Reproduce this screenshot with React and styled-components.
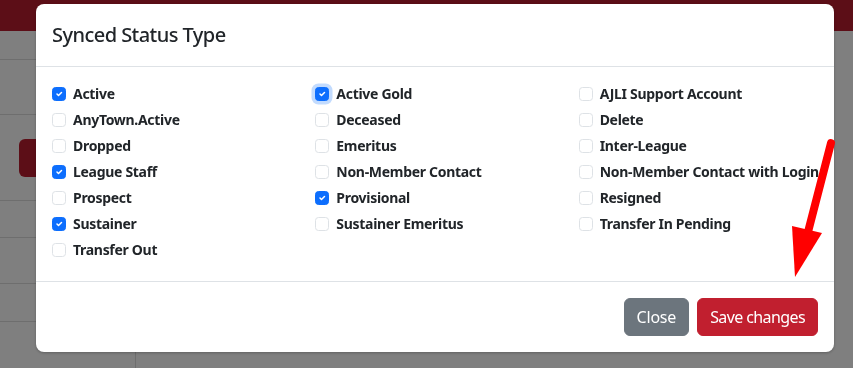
import React from "react";
import styled, { createGlobalStyle } from "styled-components";

const GlobalStyle = createGlobalStyle`
  html, body { margin: 0; padding: 0; }
  body {
    width: 853px;
    height: 368px;
    overflow: hidden;
    background: #ffffff;
    font-family: "Noto Sans", "Open Sans", sans-serif;
    color: #212529;
  }
`;

const Page = styled.div`
  width: 853px;
  height: 368px;
  display: flex;
  flex-direction: column;
  background: #ffffff;
`;

const TopBar = styled.div`
  height: 31px;
  background: #b91c2e;
  flex: none;
`;

const PageBody = styled.div`
  flex: 1;
  display: flex;
`;

const Sidebar = styled.div`
  width: 135px;
  border-right: 1px solid #dcdcdc;
  display: flex;
  flex-direction: column;
`;

const SideRow = styled.div`
  height: ${(p) => p.$h}px;
  border-bottom: 1px solid #dcdcdc;
  box-sizing: border-box;
  display: flex;
  align-items: center;
  padding-left: 19px;
`;

const SideButton = styled.div`
  width: 100px;
  height: 38px;
  border-radius: 6px;
  background: #b91c2e;
`;

const Backdrop = styled.div`
  position: fixed;
  inset: 0;
  background: rgba(0, 0, 0, 0.5);
`;

const ModalWrap = styled.div`
  position: fixed;
  inset: 0;
  padding: 4px 0 0 36px;
`;

const Modal = styled.div`
  width: 798px;
  background: #ffffff;
  border-radius: 8px;
  box-shadow: 0 1px 3px rgba(0, 0, 0, 0.25);
  display: flex;
  flex-direction: column;
  overflow: hidden;
`;

const Header = styled.div`
  padding: 16px;
  border-bottom: 1px solid #dee2e6;
`;

const Title = styled.h5`
  margin: 0;
  font-size: 20px;
  font-weight: 500;
  line-height: 30px;
  letter-spacing: -0.55px;
`;

const Body = styled.div`
  padding: 16px 4px 16px 16px;
  display: grid;
  grid-template-columns: repeat(3, 263.33px);
`;

const Check = styled.label`
  display: flex;
  align-items: flex-start;
  min-height: 24px;
  margin-bottom: 2px;
  font-size: 14px;
  line-height: 21px;
  font-weight: 700;
  color: #212529;
  white-space: nowrap;
  letter-spacing: -0.3px;
`;

const Box = styled.span`
  flex: none;
  width: 14px;
  height: 14px;
  box-sizing: border-box;
  margin: 3.5px 7px 0 0;
  border-radius: 3.5px;
  border: 1px solid ${(p) => (p.$checked ? "#0d6efd" : "#dee2e6")};
  background: ${(p) => (p.$checked ? "#0d6efd" : "#fff")};
  box-shadow: ${(p) => (p.$focus ? "0 0 0 3.5px rgba(13,110,253,0.25)" : "none")};
  display: flex;
  align-items: center;
  justify-content: center;
`;

const Footer = styled.div`
  border-top: 1px solid #dee2e6;
  padding: 12px;
  display: flex;
  justify-content: flex-end;
`;

const Button = styled.button`
  margin: 4px;
  height: 38px;
  padding: 0 12px;
  border: 1px solid ${(p) => p.$bg};
  border-radius: 6px;
  background: ${(p) => p.$bg};
  color: #fff;
  font-family: "Noto Sans", "Open Sans", sans-serif;
  font-size: 16px;
  line-height: 24px;
  letter-spacing: ${(p) => p.$ls || "-0.2px"};
`;

const Arrow = styled.svg`
  position: fixed;
  left: 0;
  top: 0;
  pointer-events: none;
`;

const items = [
  ["Active", true],
  ["Active Gold", true, true],
  ["AJLI Support Account", false],
  ["AnyTown.Active", false],
  ["Deceased", false],
  ["Delete", false],
  ["Dropped", false],
  ["Emeritus", false],
  ["Inter-League", false],
  ["League Staff", true],
  ["Non-Member Contact", false],
  ["Non-Member Contact with Login", false],
  ["Prospect", false],
  ["Provisional", true],
  ["Resigned", false],
  ["Sustainer", true],
  ["Sustainer Emeritus", false],
  ["Transfer In Pending", false],
  ["Transfer Out", false],
];

const CheckMark = () => (
  <svg width="10" height="10" viewBox="0 0 20 20">
    <path
      d="M6 10l3 3l6-6"
      fill="none"
      stroke="#fff"
      strokeWidth="3"
      strokeLinecap="round"
      strokeLinejoin="round"
    />
  </svg>
);

export default function App() {
  return (
    <>
      <GlobalStyle />
      <Page>
        <TopBar />
        <PageBody>
          <Sidebar>
            <SideRow $h={29} />
            <SideRow $h={55} />
            <SideRow $h={86}>
              <SideButton />
            </SideRow>
            <SideRow $h={37} />
            <SideRow $h={46} />
            <SideRow $h={38} />
          </Sidebar>
        </PageBody>
      </Page>
      <Backdrop />
      <ModalWrap>
        <Modal>
          <Header>
            <Title>Synced Status Type</Title>
          </Header>
          <Body>
            {items.map(([label, checked, focus]) => (
              <Check key={label}>
                <Box $checked={checked} $focus={focus}>
                  {checked && <CheckMark />}
                </Box>
                {label}
              </Check>
            ))}
          </Body>
          <Footer>
            <Button $bg="#6c757d">Close</Button>
            <Button $bg="#c11f2f" $ls="-0.6px">Save changes</Button>
          </Footer>
        </Modal>
      </ModalWrap>
      <Arrow width="853" height="368" viewBox="0 0 853 368">
        <line x1="831" y1="143" x2="808" y2="232" stroke="#ff0000" strokeWidth="8" strokeLinecap="round" />
        <polygon points="792,226 822,233 795,277" fill="#ff0000" />
      </Arrow>
    </>
  );
}
